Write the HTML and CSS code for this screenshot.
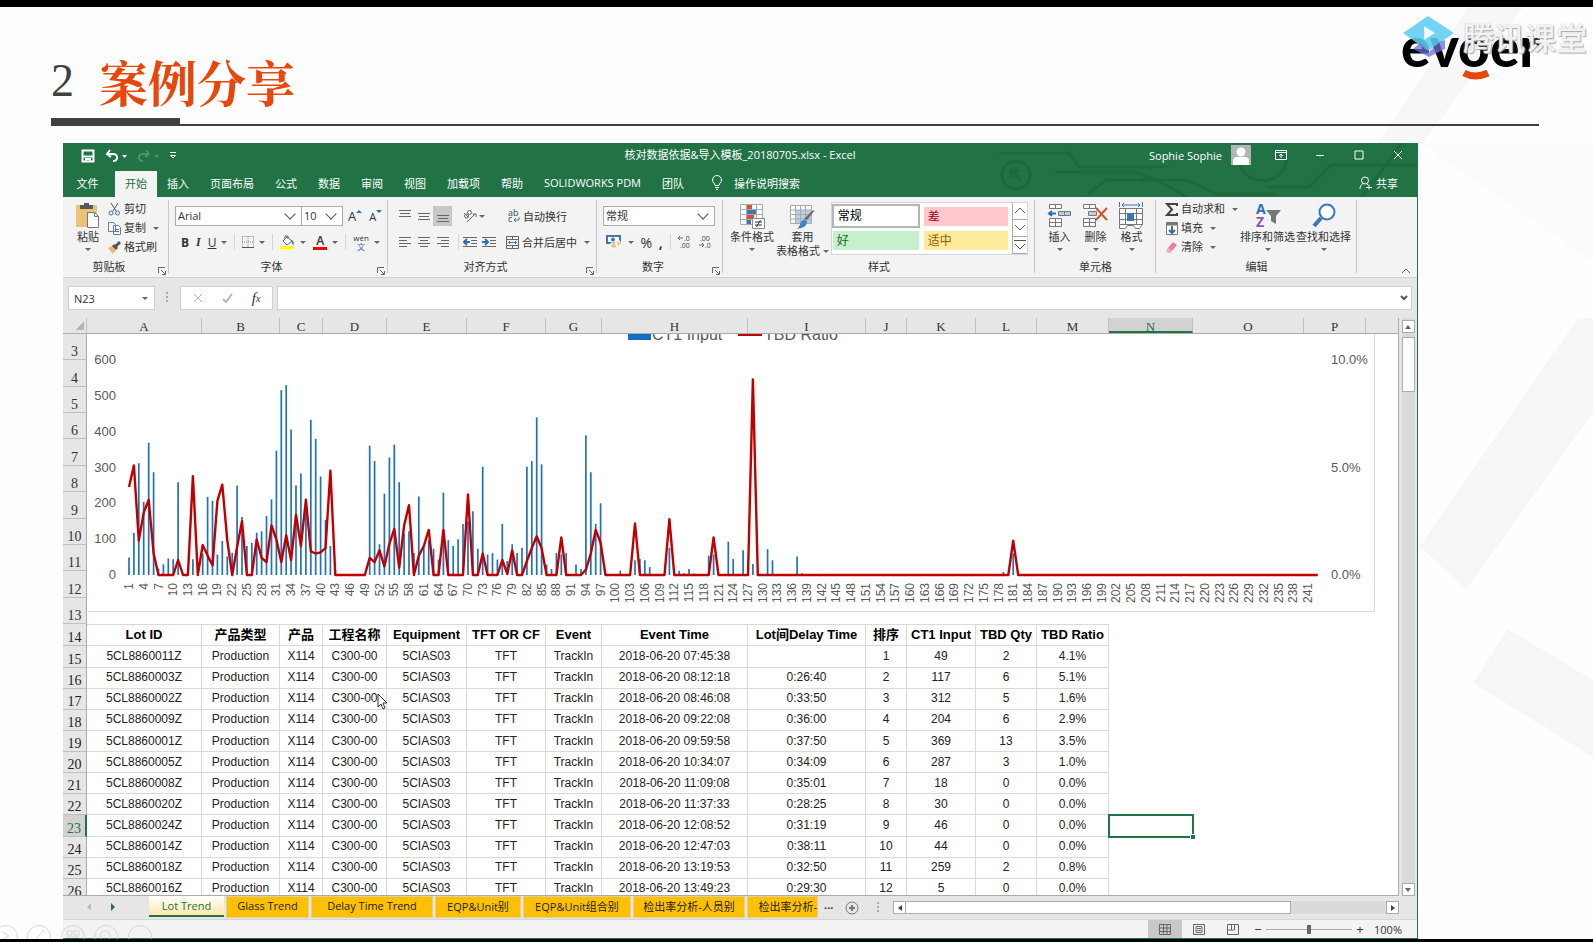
FILE: index.html
```html
<!DOCTYPE html>
<html lang="zh-CN">
<head>
<meta charset="utf-8">
<title>案例分享</title>
<link rel="stylesheet" href="styles.css">
</head>
<body>
<div class="slide">
<svg class="slide-bg" viewBox="0 0 400 942" width="400" height="942" aria-hidden="true">
  <path d="M275 7L330 7L230 143L185 143Z" fill="#f7f7f8"/>
  <path d="M227 143L400 143L400 262Z" fill="#fbfbfb"/>
  <path d="M227 546L385 318L400 318L400 412L273 590Z" fill="#f6f6f6"/>
  <path d="M315 629L400 680L400 757L280 683Z" fill="#f6f6f6"/>
</svg>

<header class="slide-head">
  <h1><span class="num">2</span><span class="name">案例分享</span></h1>
  <div class="rule"></div>
  <div class="brand">
    <svg width="200" height="76" viewBox="0 0 200 76" aria-label="evoer">
      <text x="8" y="58" class="brand-word">evoer</text>
      <path d="M71 64Q82 70 95 64" fill="none" stroke="#e8470c" stroke-width="7"/>
      <path d="M10 24L35 7L61 24L35 42Z" fill="#5fcdf0" opacity=".88"/>
      <path d="M31 17L42 24L31 31Z" fill="#fff" opacity=".9"/>
      <path d="M20 40L27 34L36 43L46 33L52 31L52 40L36 48Z" fill="#6a6fd8" opacity=".75"/>
    </svg>
    <span class="watermark">腾讯课堂</span>
  </div>
</header>

<main class="excel">
  <div class="green">
    <svg class="circuit" width="440" height="54" viewBox="0 0 440 54" aria-hidden="true">
      <g fill="none" stroke="#1e693c" stroke-width="3">
        <circle cx="39" cy="32" r="14"/><path d="M44 37L34 27M34 35V27H42M22 10h70l10 14h90M78 29h80l22 8 30 17M110 51l20 -14h80l30 14h60M262 0a24 24 0 0 0 0 20c8 24 44 24 48 -4M290 44h42l22 -22h86M385 54l40 -54"/>
      </g>
    </svg>
    <div class="titlebar">
      <div class="quick">
        <button aria-label="保存"><svg width="14" height="14" viewBox="0 0 14 14" fill="none" stroke="#fff" stroke-width="2"><path d="M1.500 1.500h11v11h-11zM1 7.500h12M5 13v-3h4v3"/></svg></button>
        <button aria-label="撤消"><svg width="22" height="14" viewBox="0 0 22 14" fill="none" stroke="#fff" stroke-width="2"><path d="M5 1L2 5l4 3M2 5h6c6 0 5 7 0 7"/><path d="M17 6h5l-2.500 3z" fill="#fff" stroke="none"/></svg></button>
        <button aria-label="恢复"><svg width="22" height="14" viewBox="0 0 22 14" fill="none" stroke="#4f936c" stroke-width="2"><path d="M9 1l3 4-4 3M12 5H6c-6 0-5 7 0 7"/><path d="M17 6h5l-2.500 3z" fill="#4f936c" stroke="none"/></svg></button>
        <button aria-label="自定义"><svg width="8" height="8" viewBox="0 0 8 8" fill="none" stroke="#fff"><path d="M1 .5h6M1.500 3.500h5L4 6z"/></svg></button>
      </div>
      <div class="doc">核对数据依据&amp;导入模板_20180705.xlsx - Excel</div>
      <div class="win">
        <span class="user">Sophie Sophie</span>
        <svg class="avatar" width="20" height="20" viewBox="0 0 20 20"><path fill="#b4b4b4" d="M0 0h20v20H0z"/><circle cx="10" cy="7" r="4.500" fill="#fff"/><path d="M2 20v-4q0-4 4-4h8q4 0 4 4v4z" fill="#fff"/></svg>
        <button aria-label="功能区"><svg width="12" height="10" viewBox="0 0 12 10" fill="none" stroke="#fff"><path d="M.5.500h11v9H.500zM.500 2.500h11M6 8V4M4 6l2-2 2 2"/></svg></button>
        <button aria-label="最小化"><svg width="10" height="10" viewBox="0 0 10 10" stroke="#fff"><path d="M1 5.500h8"/></svg></button>
        <button aria-label="最大化"><svg width="10" height="10" viewBox="0 0 10 10" stroke="#fff" fill="none"><path d="M1 1h8v8H1z"/></svg></button>
        <button aria-label="关闭"><svg width="10" height="10" viewBox="0 0 10 10" stroke="#fff"><path d="M1 1l8 8M9 1l-8 8"/></svg></button>
      </div>
    </div>
    <nav class="tabs">
      <button class="file">文件</button>
      <button class="active">开始</button>
      <button>插入</button>
      <button>页面布局</button>
      <button>公式</button>
      <button>数据</button>
      <button>审阅</button>
      <button>视图</button>
      <button>加载项</button>
      <button>帮助</button>
      <button>SOLIDWORKS PDM</button>
      <button>团队</button>
      <button class="tell"><svg width="12" height="15" viewBox="0 0 12 15" fill="none" stroke="#fff"><path d="M4 10.500C4 8 1.500 8 1.500 5a4.500 4.500 0 0 1 9 0C10.500 8 8 8 8 10.500zM4 12.500h4M5 14.500h2"/></svg>操作说明搜索</button>
      <button class="share"><svg width="13" height="14" viewBox="0 0 13 14" fill="none" stroke="#fff"><circle cx="6" cy="4.500" r="3.500"/><path d="M1 13c0-3 1-4 3-5.500M8 8l1 1M7 11.500h6M10 8.500v5"/></svg>共享</button>
    </nav>
  </div>

  <div class="ribbon">
    <section class="group g-clip">
      <div class="body">
        <button class="big"><svg width="26" height="28" viewBox="0 0 26 28"><path fill="#ecc279" d="M1 3h21v22H1z"/><path fill="#5a5a5a" d="M5 3h4V1h5v2h4v4H5z"/><path d="M12.500 10.500h7l4 4v11h-11z" fill="#fff" stroke="#777"/><path d="M19.500 10.500v4h4" fill="none" stroke="#777"/></svg><span>粘贴</span><i class="dd"></i></button>
        <div class="list">
          <button><svg width="13" height="13" viewBox="0 0 13 13" fill="none" stroke="#555"><path d="M3 0l5 8M10 0L5 8"/><g stroke="#3c76b5"><circle cx="3" cy="10" r="2"/><circle cx="9.500" cy="10" r="2"/></g></svg>剪切</button>
          <button><svg width="13" height="13" viewBox="0 0 13 13" fill="#f3f3f3" stroke="#6b7f99"><path d="M.5.500h5l2 2v7h-7zM5.500 3.500h5l2 2v7h-7z"/><path d="M7 7.500h4M7 9.500h4" stroke="#3c76b5"/></svg>复制 <i class="dd"></i></button>
          <button><svg width="13" height="13" viewBox="0 0 13 13"><path d="M0 7l4-2 4 4-3 4z" fill="#ecb574"/><path d="M5 4l4 4M8 5l4-4" stroke="#555" stroke-width="3"/></svg>格式刷</button>
        </div>
      </div>
      <div class="label"><span>剪贴板</span><svg class="launch" width="8" height="8" viewBox="0 0 8 8"><path d="M.5 6V.500H7M3 3l4 4M7.500 4v3.500H4" fill="none" stroke="#666"/></svg></div>
    </section>

    <section class="group g-font">
      <div class="body rows">
        <div class="row">
          <label class="combo w-font"><select aria-label="字体"><option>Arial</option></select></label>
          <label class="combo w-size"><select aria-label="字号"><option>10</option></select></label>
          <button class="grow-a">A<svg width="6" height="12" viewBox="0 0 6 12"><path d="M0 3h6L3 0z" fill="#2f6eb5"/></svg></button>
          <button class="grow-a small">A<svg width="6" height="12" viewBox="0 0 6 12"><path d="M0 0h6L3 3z" fill="#2f6eb5"/></svg></button>
        </div>
        <div class="row letters">
          <button><b>B</b></button><button><i class="it">I</i></button><button><u>U</u></button><i class="dd"></i><i class="sep"></i>
          <button aria-label="边框"><svg width="12" height="12" viewBox="0 0 12 12" fill="none" stroke="#888"><path stroke-dasharray="1 1" d="M.5.500h11v11M.500.500v11M6 0v11M0 6h12"/><path d="M0 11.500h12" stroke="#555"/></svg></button><i class="dd"></i><i class="sep"></i>
          <button aria-label="填充颜色"><svg width="15" height="15" viewBox="0 0 15 15"><path d="M3 6l4-4 5 4-5 4zM5 4V1h3v3" fill="#fff" stroke="#666"/><path d="M12 5q3 3 1 5-2-2-1-5" fill="#3c76b5"/><path fill="#ff0" d="M0 11h14v3H0z"/></svg></button><i class="dd"></i>
          <button class="fc">A</button><i class="dd"></i><i class="sep"></i>
          <button class="wen"><span>wén</span><em>文</em></button><i class="dd"></i>
        </div>
      </div>
      <div class="label"><span>字体</span><svg class="launch" width="8" height="8" viewBox="0 0 8 8"><path d="M.5 6V.500H7M3 3l4 4M7.500 4v3.500H4" fill="none" stroke="#666"/></svg></div>
    </section>

    <section class="group g-align">
      <div class="body rows">
        <div class="row">
          <button aria-label="顶端对齐"><svg width="12" height="14" viewBox="0 0 12 14" stroke="#666"><path d="M0 1.500h12M1 4.500h10M0 7.500h12"/></svg></button>
          <button aria-label="垂直居中"><svg width="12" height="14" viewBox="0 0 12 14" stroke="#666"><path d="M0 4.500h12M1 7.500h10M0 10.500h12"/></svg></button>
          <button class="on" aria-label="底端对齐"><svg width="12" height="14" viewBox="0 0 12 14" stroke="#666"><path d="M0 6.500h12M1 9.500h10M0 12.500h12"/></svg></button>
          <i class="sep hide"></i>
          <button aria-label="方向"><svg width="14" height="14" viewBox="0 0 14 14" fill="none" stroke="#666"><circle cx="3.500" cy="7" r="2"/><circle cx="6.500" cy="3.500" r="2"/><path d="M1 4l4 4M4 13l8-8M9.500 5H13v3"/></svg></button><i class="dd"></i>
          <button class="txt wrap"><svg width="12" height="14" viewBox="0 0 12 14"><text x="0" y="7" font-size="9" class="mini">ab</text><text x="0" y="13" font-size="9" class="mini">c</text><path d="M11 8v3H6M8 9l-2 2 2 2" fill="none" stroke="#3c76b5"/></svg>自动换行</button>
        </div>
        <div class="row">
          <button aria-label="左对齐"><svg width="12" height="12" viewBox="0 0 12 12" stroke="#666"><path d="M0 1.500h12M0 4.500h8M0 7.500h12M0 10.500h8"/></svg></button>
          <button aria-label="居中"><svg width="12" height="12" viewBox="0 0 12 12" stroke="#666"><path d="M0 1.500h12M2 4.500h8M0 7.500h12M2 10.500h8"/></svg></button>
          <button aria-label="右对齐" class="r3"><svg width="12" height="12" viewBox="0 0 12 12" stroke="#666"><path d="M0 1.500h12M4 4.500h8M0 7.500h12M4 10.500h8"/></svg></button>
          <i class="sep"></i>
          <button aria-label="减少缩进"><svg width="14" height="12" viewBox="0 0 14 12" stroke="#666" fill="none"><path d="M0 1.500h14M8 4.500h6M8 7.500h6M0 10.500h14"/><path d="M7 6H1M4 3L1 6l3 3" stroke="#2f6eb5" stroke-width="2"/></svg></button>
          <button aria-label="增加缩进"><svg width="14" height="12" viewBox="0 0 14 12" stroke="#666" fill="none"><path d="M0 1.500h14M8 4.500h6M8 7.500h6M0 10.500h14"/><path d="M0 6h6M3 3l3 3-3 3" stroke="#2f6eb5" stroke-width="2"/></svg></button>
          <button class="txt merge"><svg width="13" height="13" viewBox="0 0 13 13" fill="none" stroke="#666"><path d="M.5.500h12v12H.500zM.500 3.500h12M.500 9.500h12M6.500.500v3M6.500 9.500v3"/><path d="M2 6.500h9M4 5L2.500 6.500 4 8M9 5l1.500 1.500L9 8" stroke="#3c76b5"/></svg>合并后居中</button><i class="dd"></i>
        </div>
      </div>
      <div class="label"><span>对齐方式</span><svg class="launch" width="8" height="8" viewBox="0 0 8 8"><path d="M.5 6V.500H7M3 3l4 4M7.500 4v3.500H4" fill="none" stroke="#666"/></svg></div>
    </section>

    <section class="group g-num">
      <div class="body rows">
        <div class="row"><label class="combo w-num"><select aria-label="数字格式"><option>常规</option></select></label></div>
        <div class="row nums">
          <button aria-label="会计格式"><svg width="15" height="14" viewBox="0 0 15 14"><path d="M1 1h13v7H1z" fill="#fff" stroke="#3c76b5" stroke-width="2"/><circle cx="7" cy="4.500" r="2" fill="#3c76b5"/><path d="M5 8h6v5H5zM10 6h4v5h-4z" fill="#ecc279" stroke="#fff"/></svg></button><i class="dd"></i>
          <button class="pct">%</button><button class="pct"><b>,</b></button><i class="sep"></i>
          <button aria-label="增加小数位"><svg width="14" height="14" viewBox="0 0 14 14"><text x="7" y="6" font-size="7" class="mini">.0</text><text x="3" y="13" font-size="7" class="mini">.00</text><path d="M6 3H1M3 1L1 3l2 2" fill="none" stroke="#3c76b5"/></svg></button>
          <button aria-label="减少小数位"><svg width="14" height="14" viewBox="0 0 14 14"><text x="2" y="6" font-size="7" class="mini">.00</text><text x="7" y="13" font-size="7" class="mini">.0</text><path d="M1 10h5M4 8l2 2-2 2" fill="none" stroke="#3c76b5"/></svg></button>
        </div>
      </div>
      <div class="label"><span>数字</span><svg class="launch" width="8" height="8" viewBox="0 0 8 8"><path d="M.5 6V.500H7M3 3l4 4M7.500 4v3.500H4" fill="none" stroke="#666"/></svg></div>
    </section>

    <section class="group g-style">
      <div class="body">
        <button class="big"><svg width="28" height="28" viewBox="0 0 28 28"><path d="M2.500 2.500h22v20h-22zM2.500 7.500h22M2.500 12.500h22M2.500 17.500h22M8.500 2.500v20M18.500 2.500v20" fill="#fff" stroke="#aaa"/><path fill="#d2552f" d="M9 3h5v4H9zM9 13h7v4H9z"/><path fill="#3c76b5" d="M9 8h9v4H9zM9 18h4v4H9z"/><path d="M14.500 16.500h12v10h-12z" fill="#fff" stroke="#888"/><path d="M17 20h7M17 23h7M22.500 18l-4 7" stroke="#333"/></svg><span>条件格式</span><i class="dd"></i></button>
        <button class="big two"><svg width="28" height="28" viewBox="0 0 28 28"><path fill="#fff" stroke="#aaa" d="M2.500 3.500h21v18h-21z"/><path fill="#b8cfe4" d="M8 8h15v13H8z"/><path d="M2.500 8h21M2.500 12.500h21M2.500 17h21M7.500 3.500v18M12.500 3.500v18M17.500 3.500v18" stroke="#aaa"/><path d="M27 8l-8 10-3-1L24 9z" fill="#666"/><path d="M19 19c0 6-5 7-10 8 4-3 3-9 7-9z" fill="#3c86c8"/></svg><span>套用</span><span>表格格式 <i class="dd"></i></span></button>
        <div class="gallery">
          <div class="cells"><button class="c-norm">常规</button><button class="c-bad">差</button><button class="c-good">好</button><button class="c-mid">适中</button></div>
          <div class="steps">
            <button aria-label="上"><svg width="12" height="8" viewBox="0 0 12 8" fill="none" stroke="#555"><path d="M1 6l5-5 5 5"/></svg></button>
            <button aria-label="下"><svg width="12" height="8" viewBox="0 0 12 8" fill="none" stroke="#555"><path d="M1 1l5 5 5-5"/></svg></button>
            <button aria-label="更多"><svg width="12" height="12" viewBox="0 0 12 12" fill="none" stroke="#555"><path d="M0 1.500h12M1 5l5 5 5-5"/></svg></button>
          </div>
        </div>
      </div>
      <div class="label"><span>样式</span></div>
    </section>

    <section class="group g-cell">
      <div class="body">
        <button class="big"><svg width="25" height="28" viewBox="0 0 25 28" fill="#fff" stroke="#777"><path d="M2.500 2.500h12v4h-12zM8.500 2.500v4M2.500 16.500h12v8h-12zM8.500 16.500v8M2.500 20.500h12"/><path d="M11.500 9.500h12v4h-12zM17.500 9.500v4" fill="#b8cfe4"/><path d="M9 11.500H2M5 9l-3 2.500L5 14" fill="none" stroke="#2f6eb5" stroke-width="2"/></svg><span>插入</span><i class="dd"></i></button>
        <button class="big"><svg width="25" height="28" viewBox="0 0 25 28" fill="#fff" stroke="#777"><path d="M.5 2.500h12v4h-12zM6.500 2.500v4M.500 16.500h12v8h-12zM6.500 16.500v8M.500 20.500h12"/><path d="M5.500 9.500h8v4h-8z" fill="#b8cfe4"/><path d="M13 6l11 12M24 6L13 18" stroke="#d2552f" stroke-width="2"/></svg><span>删除</span><i class="dd"></i></button>
        <button class="big"><svg width="25" height="28" viewBox="0 0 25 28" fill="#fff" stroke="#777"><path d="M.5 6.500h23v16h-23zM6.500 6.500v16M17.500 6.500v16M.500 11.500h23M.500 17.500h23M.500 22.500v4h6l2-3h6l2 3h4l3-4"/><path fill="#3c76b5" stroke="none" d="M8 11h7v8H8z"/><path d="M3 3h18M5 1L3 3l2 2M19 1l2 2-2 2M.500 0v5M23.500 0v5" fill="none" stroke="#3c76b5"/></svg><span>格式</span><i class="dd"></i></button>
      </div>
      <div class="label"><span>单元格</span></div>
    </section>

    <section class="group g-edit">
      <div class="body">
        <div class="list">
          <button><svg width="13" height="13" viewBox="0 0 13 13" fill="none" stroke="#444" stroke-width="2"><path d="M12 3V1H2l5 5.500L2 12h10v-2"/></svg>自动求和 <i class="dd"></i></button>
          <button><svg width="13" height="13" viewBox="0 0 13 13" fill="#fff" stroke="#777"><path d="M1.500.500h11v12h-11z"/><path d="M1.500 2h11" stroke-width="3"/><path d="M7 4v7M4 8l3 3 3-3" fill="none" stroke="#2f6eb5" stroke-width="2"/></svg>填充 <i class="dd"></i></button>
          <button><svg width="13" height="13" viewBox="0 0 13 13"><path d="M8 1l4 3-5 6-4-3z" fill="#ea7fa0"/><path d="M3 7l4 3-2 2H3L1 10z" fill="#f2a9bd"/></svg>清除 <i class="dd"></i></button>
        </div>
        <button class="big"><svg width="28" height="28" viewBox="0 0 28 28"><text x="2" y="12" font-size="14" font-weight="700" fill="#2f6eb5" class="az">A</text><text x="2" y="25" font-size="14" font-weight="700" fill="#8a55b5" class="az">Z</text><path d="M12 8h15l-5 6v8l-5-3v-5z" fill="#777"/></svg><span>排序和筛选</span><i class="dd"></i></button>
        <button class="big"><svg width="28" height="28" viewBox="0 0 28 28" fill="none" stroke="#3c76b5"><circle cx="17" cy="10" r="7.500" stroke-width="2" fill="#fff"/><path d="M11 16l-7 8" stroke-width="4"/></svg><span>查找和选择</span><i class="dd"></i></button>
      </div>
      <div class="label"><span>编辑</span></div>
    </section>
    <button class="collapse" aria-label="折叠功能区"><svg width="10" height="6" viewBox="0 0 10 6" fill="none" stroke="#666"><path d="M1 5l4-4 4 4"/></svg></button>
  </div>

  <div class="formula">
    <label class="namebox"><input value="N23" aria-label="名称框"><i class="dd"></i></label>
    <svg width="3" height="12" viewBox="0 0 3 12" fill="#aaa"><path d="M0 0h2v2H0zM0 4h2v2H0zM0 8h2v2H0z"/></svg>
    <div class="fx">
      <button aria-label="取消"><svg width="10" height="10" viewBox="0 0 10 10" stroke="#b5b5b5"><path d="M1 1l8 8M9 1L1 9"/></svg></button>
      <button aria-label="输入"><svg width="11" height="10" viewBox="0 0 11 10" fill="none" stroke="#b5b5b5" stroke-width="2"><path d="M1 6l3 3 6-8"/></svg></button>
      <button class="fxb">f<sub>x</sub></button>
    </div>
    <label class="finput"><input value="" aria-label="编辑栏"><svg width="8" height="6" viewBox="0 0 8 6" fill="none" stroke="#555" stroke-width="2"><path d="M1 1l3 3 3-3"/></svg></label>
  </div>

  <div class="work">
    <div class="sheet">
      <div class="cols" id="cols"></div>
      <div class="grid">
        <div class="top">
          <div class="rownums" id="rownums"></div>
          <svg id="chart" width="1288" height="290" viewBox="87 334 1288 290"></svg>
        </div>
        <table class="data"><colgroup id="colgroup"></colgroup><tbody id="rows"></tbody></table>
      </div>
    </div>
    <div class="vscroll">
      <button aria-label="向上"><svg width="6" height="4"><path d="M0 4h6L3 0z" fill="#666"/></svg></button>
      <div class="thumb"></div>
      <button class="down" aria-label="向下"><svg width="6" height="4"><path d="M0 0h6L3 4z" fill="#666"/></svg></button>
    </div>
  </div>

  <div class="sheets">
    <div class="arrows"><svg width="4" height="8"><path d="M4 0v8L0 4z" fill="#bbb"/></svg><svg width="4" height="8"><path d="M0 0v8l4-4z" fill="#217346"/></svg></div>
    <button class="s1 cur">Lot Trend</button>
    <button class="s2">Glass Trend</button>
    <button class="s3">Delay Time Trend</button>
    <button class="s4">EQP&amp;Unit别</button>
    <button class="s5">EQP&amp;Unit组合别</button>
    <button class="s6">检出率分析-人员别</button>
    <button class="s7">检出率分析-</button>
    <span class="more">...</span>
    <button class="add" aria-label="新工作表"><svg width="14" height="14" viewBox="0 0 14 14" fill="none" stroke="#777"><circle cx="7" cy="7" r="6"/><path d="M7 4v6M4 7h6" stroke-width="2"/></svg></button>
    <svg width="3" height="12" viewBox="0 0 3 12" fill="#aaa"><path d="M0 0h2v2H0zM0 4h2v2H0zM0 8h2v2H0z"/></svg>
    <div class="hscroll">
      <button aria-label="向左"><svg width="4" height="6"><path d="M4 0v6L0 3z" fill="#444"/></svg></button>
      <div class="thumb"></div>
      <button class="right" aria-label="向右"><svg width="4" height="6"><path d="M0 0v6l4-3z" fill="#444"/></svg></button>
    </div>
  </div>

  <div class="status">
    <button class="on" aria-label="普通"><svg width="12" height="11" viewBox="0 0 12 11" fill="none" stroke="#666"><path d="M.5.500h11v10H.500zM4.500 0v11M8 0v11M0 4h12M0 7.500h12"/></svg></button>
    <button aria-label="页面布局"><svg width="12" height="11" viewBox="0 0 12 11" fill="none" stroke="#666"><path d="M.5.500h11v10H.500zM3 2.500h6v6H3zM4 4.500h4M4 6.500h4"/></svg></button>
    <button aria-label="分页预览"><svg width="12" height="11" viewBox="0 0 12 11" fill="none" stroke="#666"><path d="M.5.500h11v10H.500zM.500 6h7V.500M4.500.500V6"/></svg></button>
    <span class="pm">−</span>
    <input type="range" min="0" max="100" value="50" aria-label="缩放">
    <span class="pm">+</span>
    <span class="zoom">100%</span>
  </div>
</main>

<svg class="pointer" width="12" height="18" viewBox="0 0 12 18"><path d="M1 1v13l3-3 2 5 2-1-2-5h4z" fill="#fff" stroke="#333"/></svg>
<svg class="showbar" width="160" height="14" viewBox="0 0 160 14" fill="none" stroke="#cfcfcf" aria-hidden="true">
  <circle cx="6" cy="12" r="11.500"/><circle cx="39" cy="12" r="11.500"/><circle cx="73" cy="12" r="11.500"/><circle cx="106" cy="12" r="11.500"/><circle cx="140" cy="12" r="11.500"/>
  <path d="M3 7l6 4-6 3M36 14l8-9M67 6h5v4h-5zM74 6h5v4h-5zM67 12h12"/><circle cx="105" cy="11" r="5"/>
</svg>
</div>
<script src="script.js"></script>
</body>
</html>
```

FILE: styles.css
```css
* { box-sizing: border-box; }
body {
  margin: 0;
  background: #000;
  font-family: "Open Sans", "Noto Sans CJK SC", sans-serif;
  font-size: 11px;
  color: #333;
}
button, input, select { font: inherit; color: inherit; }
button { border: 0; background: none; padding: 0; margin: 0; display: flex; align-items: center; justify-content: center; white-space: nowrap; }
svg { flex: none; display: block; }

.slide {
  position: relative;
  height: 100vh;
  display: flex;
  flex-direction: column;
  border-top: 7px solid #000;
  border-bottom: 3px solid #000;
  background: #fefefe;
  overflow: hidden;
}
.slide-bg { position: absolute; right: 0; top: -7px; }

/* slide heading */
.slide-head { position: relative; height: 136px; flex: none; padding: 36px 54px 0 51px; }
.slide-head h1 { margin: 0; display: flex; align-items: center; gap: 25px; height: 75px; line-height: 72px; }
.num { font: 46px "Liberation Serif", serif; color: #404040; }
.name { font: 700 49px/72px "Noto Serif CJK SC", "Noto Sans CJK SC", serif; color: #e8470c; }
.rule { height: 8px; border-bottom: 2px solid #404040; background: linear-gradient(#404040, #404040) left / 129px 8px no-repeat; }
.brand { position: absolute; right: 0; top: 2px; }
.brand-word { font: 900 55px Lato, sans-serif; fill: #000; }
.watermark { position: absolute; right: 6px; top: 5px; font: 500 31px/46px "Noto Sans CJK SC", sans-serif; color: rgba(255,255,255,.85); text-shadow: 1px 1px 1px #aaa, 0 0 2px #bbb; white-space: nowrap; }

/* excel window */
.excel {
  position: relative;
  flex: 1;
  min-height: 0;
  display: flex;
  flex-direction: column;
  margin: 0 175px 0 63px;
  background: #e6e6e6;
  border-right: 1px solid #217346;
  border-bottom: 1px solid #217346;
}
.green { position: relative; background: #217346; color: #fff; flex: none; }
.circuit { position: absolute; right: 0; top: 0; }
.titlebar { position: relative; height: 28px; display: grid; grid-template-columns: 1fr auto 1fr; align-items: center; }
.quick { display: flex; gap: 10px; padding: 0 0 2px 18px; }
.doc { line-height: 24px; padding-bottom: 4px; }
.win { display: flex; justify-content: flex-end; align-items: center; padding: 0 0 4px 0; }
.user { font-size: 11px; padding-right: 9px; }
.avatar { margin-right: 10px; }
.win button { width: 39px; height: 24px; }
.tabs { position: relative; display: flex; height: 26px; }
.tabs button { padding: 0 11px 3px 10px; }
.tabs .file { width: 52px; padding-left: 8px; }
.tabs .active { width: 42px; padding: 0 0 3px; background: #f3f3f3; color: #217346; }
.tabs .tell { gap: 11px; padding-left: 16px; }
.tabs .share { margin-left: auto; gap: 4px; padding-right: 19px; }

/* ribbon */
.ribbon { position: relative; display: flex; height: 81px; flex: none; background: #f3f3f3; border-bottom: 1px solid #d2d2d2; }
.group { display: flex; flex-direction: column; position: relative; flex: none; }
.group::after { content: ""; position: absolute; right: 0; top: 3px; bottom: 4px; width: 1px; background: #c8c8c8; }
.body { height: 62px; padding-top: 5px; display: flex; align-items: flex-start; }
.label { position: relative; line-height: 16px; text-align: center; }
.label span { padding-right: 14px; }
.launch { position: absolute; right: 3px; bottom: 0; }
.g-clip { width: 106px; }
.g-font { width: 219px; }
.g-align { width: 209px; }
.g-num { width: 126px; }
.g-style { width: 312px; }
.g-style .label span, .g-cell .label span, .g-edit .label span { padding: 0; }
.g-cell { width: 121px; }
.g-edit { width: 201px; }
.dd { display: inline-block; border: 3px solid transparent; border-top-color: #666; border-bottom: 0; width: 0; height: 0; flex: none; }
.big { flex-direction: column; justify-content: flex-start; line-height: 14px; }
.big > .dd { margin-top: 4px; }
.big .dd { vertical-align: 2px; }
.list { display: flex; flex-direction: column; margin-top: -2px; }
.list button { height: 20px; gap: 3px; justify-content: flex-start; line-height: 14px; margin-top: -1px; }
.list .dd { margin-left: 4px; }
.g-clip .body { padding-left: 12px; gap: 7px; }
.rows { flex-direction: column; align-items: stretch; padding-top: 9px; gap: 6px; }
.row { display: flex; align-items: center; height: 20px; }
.sep { width: 1px; height: 16px; background: #d5d5d5; flex: none; }
.hide { background: none; }
.combo { position: relative; display: block; height: 20px; border: 1px solid #ababab; background: #fff; }
.combo::after { content: ""; position: absolute; right: 7px; top: 3px; width: 7px; height: 7px; border: solid #555; border-width: 0 1px 1px 0; transform: rotate(45deg); }
.combo select { appearance: none; border: 0; background: none; width: 100%; height: 18px; padding: 0 2px; line-height: 18px; }
.w-font { width: 127px; }
.w-size { width: 42px; margin-left: -1px; }
.w-num { width: 112px; }
.g-font .row, .g-num .row { padding-left: 6px; }
.grow-a { font-size: 13px; margin-left: 5px; }
.grow-a.small { font-size: 11px; margin-left: 7px; }
.g-font .letters { justify-content: space-between; padding: 0 8px 0 12px; }
.it { font-family: "Liberation Serif", serif; font-weight: bold; }
.letters button { font-size: 12px; }
.letters .dd { margin-left: -2px; }
.letters .fc { border-bottom: 3px solid #f00; width: 14px; height: 15px; line-height: 12px; font-weight: 600; }
.letters .wen { flex-direction: column; font-size: 8px; line-height: 8px; }
.wen em { font-style: normal; color: #2f6eb5; line-height: 9px; }
.g-align .row { padding-left: 7px; }
.g-align .row button { width: 19px; height: 20px; }
.g-align .on { background: #c8c8c8; }
.g-align .row .txt { width: auto; gap: 3px; }
.g-align .sep { margin: 0 1px 0 6px; }
.g-align .wrap { margin-left: 23px; }
.g-align .merge { margin-left: 8px; margin-right: 7px; }
.mini { font-family: "Open Sans", sans-serif; fill: #444; }
.az { font-family: "Open Sans", sans-serif; }
.g-num .nums { justify-content: space-between; padding: 0 11px 0 9px; }
.nums .pct { font-size: 14px; }
.g-style .body { padding-left: 7px; }
.g-style .two { margin-left: 2px; }
.gallery { display: flex; margin-left: 2px; border: 1px solid #d5d5d5; background: #fff; height: 53px; }
.cells { display: grid; grid-template-columns: 88px 86px; grid-template-rows: 24px 24px; padding: 1px 3px 1px 0; column-gap: 3px; }
.cells button { justify-content: flex-start; font-size: 12px; padding: 0 0 2px 4px; margin: 3px 1px 2px; }
.cells .c-norm { border: 2px solid #b5b5b5; margin: 0; color: #000; }
.c-bad { background: #ffc7ce; color: #9c0006; }
.c-good { background: #c6efce; color: #107010; }
.c-mid { background: #ffeb9c; color: #9c5700; }
.steps { display: flex; flex-direction: column; width: 15px; border-left: 1px solid #ababab; }
.steps button { flex: 1; border-bottom: 1px solid #ababab; }
.g-cell .body { padding-left: 12px; gap: 11px; }
.g-edit .body { padding-left: 9px; gap: 1px; }
.g-edit .list { width: 74px; }
.collapse { position: absolute; right: 6px; bottom: 3px; }

/* formula bar */
.formula { display: flex; align-items: center; flex: none; height: 40px; padding: 0 5px; gap: 4px; }
.namebox, .fx, .finput { display: flex; align-items: center; height: 24px; background: #fff; border: 1px solid #d0d0d0; }
.namebox { width: 87px; padding: 0 6px 0 5px; margin-right: 7px; }
.namebox input, .finput input { border: 0; background: none; width: 0; flex: 1; padding: 0; }
.fx { width: 93px; margin-left: 7px; justify-content: space-around; padding: 0 2px; }
.fxb { font: italic 15px "Liberation Serif", serif; }
.fxb sub { font-size: 10px; }
.finput { flex: 1; padding: 0 3px; }

/* sheet */
.work { flex: 1; min-height: 0; display: flex; }
.sheet { flex: 1; min-width: 0; display: flex; flex-direction: column; overflow: hidden; border-right: 1px solid #ababab; border-bottom: 1px solid #ababab; }
.cols { display: flex; flex: none; height: 16px; border-bottom: 1px solid #ababab; font: 13px/17px "Liberation Serif", serif; text-align: center; }
.cols div { flex: none; border-right: 1px solid #c0c0c0; }
.cols .corner { width: 25px; background: linear-gradient(135deg, transparent 50%, #b5b5b5 50%) 12px 3px / 9px 9px no-repeat; }
.cols .corner, .rownums { width: 24px; }
.cols .sel { background: #d2d2d2; color: #217346; border-bottom: 2px solid #217346; }
.grid { flex: 1; min-height: 0; background: #fff; overflow: hidden; }
.top { display: flex; height: 290px; }
.rownums { display: flex; flex-direction: column; background: #e6e6e6; border-right: 1px solid #ababab; }
.rownums div { flex: 1; display: flex; align-items: flex-end; justify-content: center; border-bottom: 1px solid #c0c0c0; font: 14px/14px "Liberation Serif", serif; }
.axis { font: 13px "Liberation Sans", Arial, sans-serif; fill: #595959; }
.ticks { font: 12px "Liberation Sans", Arial, sans-serif; fill: #595959; }
.legend { font: 16px "Liberation Sans", Arial, sans-serif; fill: #595959; }
.data { table-layout: fixed; border-collapse: separate; border-spacing: 0; width: 1130px; height: 276px; font: 12px/14px "Liberation Sans", Arial, sans-serif; color: #222; text-align: center; }
.data td { padding: 0 0 1px; border-right: 1px solid #d9d9d9; border-bottom: 1px solid #d9d9d9; white-space: nowrap; }
.data .num-cell { padding: 0; font: 14px/14px "Liberation Serif", serif; vertical-align: bottom; background: #e6e6e6; border-right: 1px solid #ababab; border-bottom: 1px solid #c0c0c0; }
.data .sel { background: #d2d2d2; color: #217346; border-right: 2px solid #217346; }
.data .head td { font: bold 13px/14px "Liberation Sans", "Noto Sans CJK SC", sans-serif; color: #000; border-top: 1px solid #d9d9d9; }
.data tr td:last-child, .data .head td:last-child { border: 0; }
.data .active-cell { position: relative; outline: 2px solid #217346; outline-offset: -1px; }
.active-cell::after { content: ""; position: absolute; right: -2px; bottom: -2px; width: 4px; height: 4px; background: #217346; outline: 1px solid #fff; }

.vscroll { width: 18px; display: flex; flex-direction: column; align-items: center; padding-top: 2px; background: linear-gradient(#dadada, #dadada) center / 13px no-repeat; }
.vscroll button { width: 13px; height: 13px; background: #fff; border: 1px solid #ababab; }
.vscroll .thumb { width: 13px; height: 55px; background: #fff; border: 1px solid #ababab; margin-top: 4px; }
.vscroll .down { margin-top: auto; }

/* sheet tabs */
.sheets { display: flex; flex: none; height: 24px; align-items: flex-start; border-bottom: 1px solid #d5d5d5; }
.sheets > svg { margin: 6px 13px 0 18px; }
.arrows { display: flex; gap: 20px; padding: 7px 0 0 24px; width: 86px; }
.sheets > button { height: 20px; margin: 1px 4px 0 0; padding-bottom: 3px; background: #ffc000; color: #222; outline: 1px solid #e3cf93; }
.sheets .cur { height: 21px; margin: 0 3px 0 0; padding-bottom: 0; background: linear-gradient(#fff, #ffe9a8); color: #217346; border-bottom: 2px solid #217346; outline: 0; }
.s1 { width: 75px; }
.s2 { width: 81px; }
.s3 { width: 120px; }
.s4 { width: 84px; }
.s5 { width: 106px; }
.s6 { width: 110px; }
.s7 { width: 69px; }
.sheets .s7 { justify-content: flex-end; margin-right: 0; }
.more { width: 28px; padding-left: 7px; font-weight: bold; line-height: 18px; }
.sheets .add { width: 14px; height: 14px; background: none; outline: 0; margin: 5px 0 0; padding: 0; }
.hscroll { flex: 1; display: flex; height: 13px; margin: 5px 18px 0 0; background: #dadada; }
.hscroll button { width: 13px; background: #fff; border: 1px solid #ababab; }
.hscroll .thumb { width: 76%; background: #fff; border: 1px solid #ababab; border-left: 0; }
.hscroll .right { margin-left: auto; }

.status { display: flex; flex: none; height: 18px; align-items: center; justify-content: flex-end; background: #f3f3f3; padding-right: 15px; }
.status button { width: 34px; height: 18px; }
.status .on { background: #c8c8c8; }
.pm { font-size: 13px; width: 16px; text-align: center; }
.status input { appearance: none; width: 86px; height: 1px; margin: 0; background: #ababab; }
.status input::-webkit-slider-thumb { appearance: none; width: 4px; height: 9px; background: #666; }
.zoom { padding-left: 6px; }

.pointer { position: absolute; left: 377px; top: 686px; }
.showbar { position: absolute; left: 0; bottom: 0; opacity: .8; }
```

FILE: script.js
```js
const cols = [['A',115],['B',78],['C',43],['D',64],['E',80],['F',79],['G',56],['H',146],['I',118],['J',41],['K',69],['L',61],['M',72],['N',84],['O',111],['P',62]];

document.getElementById('cols').innerHTML = '<div class="corner"></div>' +
  cols.map(c => `<div class="${c[0] == 'N' ? 'sel' : ''}" style="width:${c[1]}px">${c[0]}</div>`).join('');

let nums = '';
for (let i = 3; i <= 13; i++) nums += `<div>${i}</div>`;
document.getElementById('rownums').innerHTML = nums;

document.getElementById('colgroup').innerHTML = '<col style="width:24px">' +
  cols.slice(0, 14).map(c => `<col style="width:${c[1]}px">`).join('');

const head = ['Lot ID','产品类型','产品','工程名称','Equipment','TFT OR CF','Event','Event Time','Lot间Delay Time','排序','CT1 Input','TBD Qty','TBD Ratio'];
const lots = [
  ['0011','07:45:38','',49,2,'4.1%'],
  ['0003','08:12:18','0:26:40',117,6,'5.1%'],
  ['0002','08:46:08','0:33:50',312,5,'1.6%'],
  ['0009','09:22:08','0:36:00',204,6,'2.9%'],
  ['0001','09:59:58','0:37:50',369,13,'3.5%'],
  ['0005','10:34:07','0:34:09',287,3,'1.0%'],
  ['0008','11:09:08','0:35:01',18,0,'0.0%'],
  ['0020','11:37:33','0:28:25',30,0,'0.0%'],
  ['0024','12:08:52','0:31:19',46,0,'0.0%'],
  ['0014','12:47:03','0:38:11',44,0,'0.0%'],
  ['0018','13:19:53','0:32:50',259,2,'0.8%'],
  ['0016','13:49:23','0:29:30',5,0,'0.0%']
];
let html = '<tr class="head"><th class="num-cell">14</th>' + head.map(h => `<td>${h}</td>`).join('') + '<td></td></tr>';
lots.forEach((l, i) => {
  const n = i + 15;
  const cells = ['5CL886' + l[0] + 'Z', 'Production', 'X114', 'C300-00', '5CIAS03', 'TFT', 'TrackIn', '2018-06-20 ' + l[1], l[2], i + 1, l[3], l[4], l[5]];
  html += `<tr><th class="num-cell ${n == 23 ? 'sel' : ''}">${n}</th>` + cells.map(c => `<td>${c}</td>`).join('') +
    `<td class="${n == 23 ? 'active-cell' : ''}"></td></tr>`;
});
document.getElementById('rows').innerHTML = html;

// chart
const input = [49,117,312,204,369,287,18,30,46,44,259,5,0,44,0,60,218,207,57,95,52,62,250,162,81,90,118,122,164,211,347,516,530,406,250,283,200,433,380,275,154,81,
  0,0,0,0,0,0,0,361,318,86,227,328,364,259,115,122,61,219,78,97,73,43,230,97,81,100,142,150,178,73,302,57,61,43,143,39,86,61,76,302,318,440,309,29,17,61,57,61,0,29,17,390,287,143,200];
const inputLate = {101:12,104:41,105:45,106:41,107:22,111:76,113:12,114:5,115:17,116:4,119:54,120:57,123:93,124:45,126:69,128:31,131:72,132:41,137:52,138:5,179:9,181:60};
const ratio = [4.1,5.1,1.6,2.9,3.5,1,0,0,0,0,.7,0,0,4.6,0,1.4,.9,.45,3.45,4.2,1.6,0,1.3,2.5,0,0,1.65,.8,.6,2.3,1.65,.6,1.85,.7,2.8,1.35,3.5,1.1,1,1.05,1.25,4.85,
  0,0,0,0,0,0,0,.8,.6,1.15,.4,1.45,2.15,.35,2.3,3.25,0,.9,1.35,2.1,0,0,2.1,0,0,0,0,3.75,0,0,1,0,0,0,.7,.05,1.15,0,0,.65,1.25,1.8,1.25,0,0,0,1.75,0,0,0,0,.25,1,2.1,1.5];
const ratioLate = {104:2.4,111:2.6,120:1.75,128:9.1,181:1.6};
const base = 575, left = 129, step = 1179 / 240, height = 215;
const x = i => (left + (i - 1) * step).toFixed(1);

let svg = '<path d="M88 611.5H1374.5V334" fill="none" stroke="#d9d9d9"/>';
svg += '<rect x="628" y="328" width="23" height="12" fill="#0f6fc6"/><text class="legend" x="652" y="340">CT1 Input</text>';
svg += '<path d="M738 334.5h24" stroke="#c00000" stroke-width="3"/><text class="legend" x="764" y="340">TBD Ratio</text>';
for (let v = 0; v <= 600; v += 100)
  svg += `<text class="axis" x="116" y="${Math.round(base - v / 600 * height) + 4}" text-anchor="end">${v}</text>`;
['0.0%', '5.0%', '10.0%'].forEach((t, i) => {
  svg += `<text class="axis" x="1331" y="${Math.round(base - i * height / 2) + 4}">${t}</text>`;
});
let points = '';
for (let i = 1; i <= 243; i++) {
  const v = input[i - 1] || inputLate[i] || 0;
  const r = ratio[i - 1] || ratioLate[i] || 0;
  if (v) svg += `<path d="M${x(i)} ${base}V${(base - v / 600 * height).toFixed(1)}" stroke="#1f72b8" stroke-width="1.7"/>`;
  points += `${x(i)},${(base - r / 10 * height).toFixed(1)} `;
  if (i % 3 == 1 && i <= 241)
    svg += `<text class="ticks" text-anchor="end" transform="translate(${+x(i) + 4} 583) rotate(-90)">${i}</text>`;
}
svg += `<polyline points="${points}" fill="none" stroke="#c00000" stroke-width="2.4" stroke-linejoin="round"/>`;
document.getElementById('chart').innerHTML = svg;
```
